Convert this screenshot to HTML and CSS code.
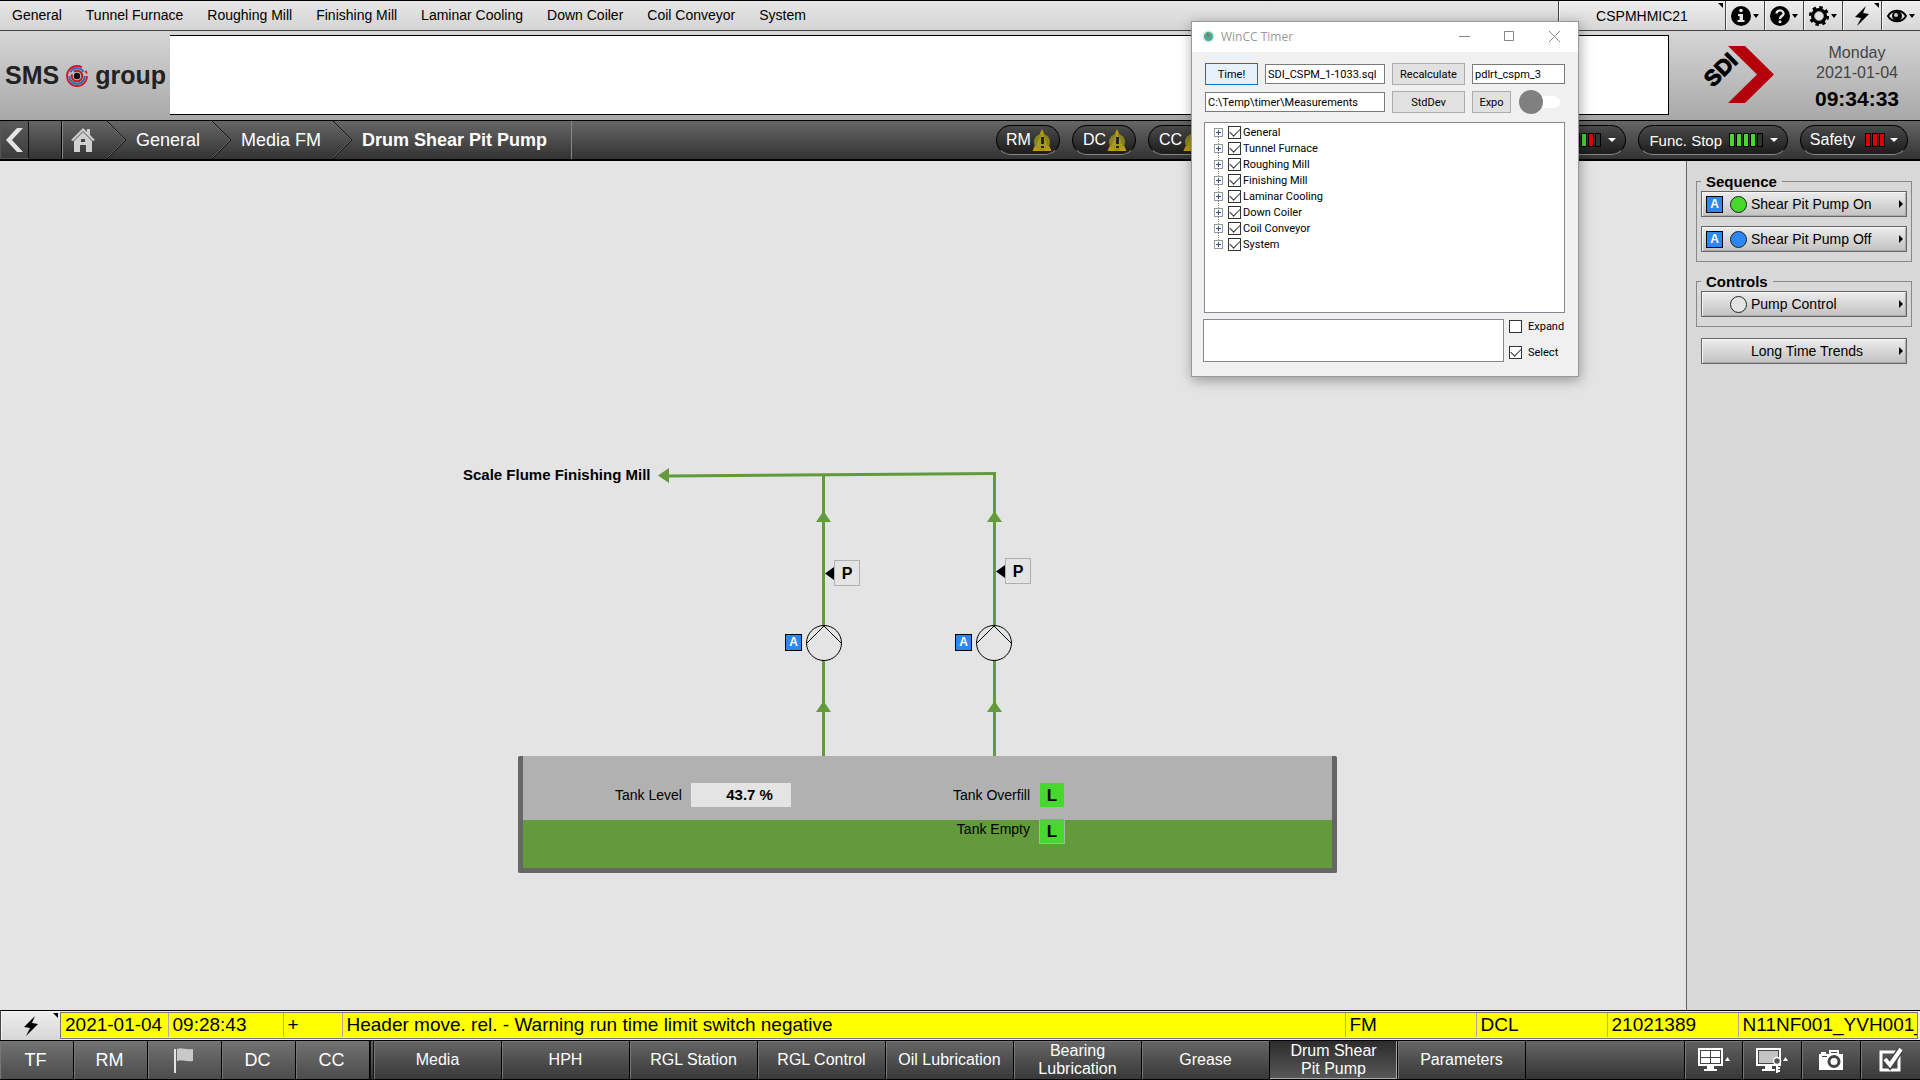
FILE: index.html
```html
<!DOCTYPE html>
<html lang="en">
<head>
<meta charset="utf-8">
<title>Drum Shear Pit Pump</title>
<link rel="stylesheet" href="styles.css">
</head>
<body>
<header>
  <div class="menubar">
    <nav class="menu">
      <a href="#">General</a><a href="#">Tunnel Furnace</a><a href="#">Roughing Mill</a><a href="#">Finishing Mill</a><a href="#">Laminar Cooling</a><a href="#">Down Coiler</a><a href="#">Coil Conveyor</a><a href="#">System</a>
    </nav>
    <div class="tools">
      <button class="tool station corner">CSPMHMIC21</button>
      <button class="tool" aria-label="Information">
        <svg width="28" height="22" viewBox="0 0 28 22"><circle cx="10" cy="11" r="10"/><circle cx="10" cy="5.500" r="1.800" fill="#e4e4e4"/><path d="M7 9h5v6h1.500v2h-7v-2H8.500v-4H7z" fill="#e4e4e4"/><path d="M22 9h6l-3 4z"/></svg>
      </button>
      <button class="tool" aria-label="Help">
        <svg width="28" height="22" viewBox="0 0 28 22"><circle cx="10" cy="11" r="10"/><path d="M6.500 8.500a3.500 3 0 1 1 5.500 2.400c-1.400 1-2 1.300-2 3" fill="none" stroke="#e4e4e4" stroke-width="2.400"/><circle cx="10" cy="16.800" r="1.500" fill="#e4e4e4"/><path d="M22 9h6l-3 4z"/></svg>
      </button>
      <button class="tool" aria-label="Settings">
        <svg width="28" height="22" viewBox="0 0 28 22"><circle cx="10" cy="11" r="8.600" fill="none" stroke="#000" stroke-width="3" stroke-dasharray="3.400 3.355"/><circle cx="10" cy="11" r="6" fill="none" stroke="#000" stroke-width="4"/><circle cx="10" cy="11" r="4.500" fill="#e4e4e4" stroke="#999"/><path d="M22 9h6l-3 4z"/></svg>
      </button>
      <button class="tool corner" aria-label="Alarms">
        <svg width="14" height="20" viewBox="0 0 14 20"><path d="M11 0 0 11l6 1-4 8L14 8 8 7z"/></svg>
      </button>
      <button class="tool" aria-label="View">
        <svg width="28" height="22" viewBox="0 0 28 22"><path d="M1 11c4-7 14-7 18 0-4 7-14 7-18 0z" fill="none" stroke="#000" stroke-width="2"/><circle cx="10" cy="11" r="5"/><circle cx="9" cy="10" r="2" fill="#ccc"/><path d="M22 9h6l-3 4z"/></svg>
      </button>
    </div>
  </div>

  <div class="banner">
    <div class="sms"><span>SMS</span>
      <svg width="22" height="22" viewBox="0 0 22 22" fill="none"><circle cx="11" cy="11" r="10" stroke="#cf1526" stroke-width="1.800" stroke-dasharray="52 5 3 3"/><circle cx="11" cy="11" r="7.700" stroke="#1d74bd" stroke-width="2" stroke-dasharray="24 4 16 4.400"/><circle cx="11" cy="11" r="5.300" stroke="#cf1526" stroke-width="2" stroke-dasharray="18 3"/><circle cx="11" cy="11" r="3.200" fill="#111"/></svg>
      <span>group</span></div>
    <div class="message"></div>
    <div class="sdi">
      <svg width="72" height="58" viewBox="0 0 72 58"><path d="M25 0h17l29 28.500L42 57H25l29-28.500z" fill="#b3000b"/><text class="sdi-text" transform="translate(10 42) rotate(-45)">SDI</text></svg>
    </div>
    <div class="clock"><span>Monday</span><span>2021-01-04</span><strong>09:34:33</strong></div>
  </div>

  <div class="navbar">
    <button class="back" aria-label="Back"><svg width="20" height="26" viewBox="0 0 20 26"><path d="M18 1 7 13l11 12h-6L1 13 12 1z" fill="#e4e4e4"/></svg></button>
    <div class="blank"></div>
    <nav class="crumbs">
      <a href="#" aria-label="Home" class="home"><svg width="24" height="24" viewBox="0 0 24 24" fill="#d0d0d0"><path d="m0 12 12-12 4 4V1h3v6l5 5-2 1L12 3 2 13z"/><path d="m3 13 9-9 9 9v11h-6v-7H9v7H3z"/><path d="M10 11h4v3h-4z" fill="#444"/></svg></a>
      <svg class="chev" width="20" height="38" viewBox="0 0 20 38" fill="none"><path d="M0 0 19 19 0 38" stroke="#111"/><path d="M-1 0 18 19-1 38" stroke="#777" stroke-width=".6"/></svg>
      <a href="#">General</a>
      <svg class="chev" width="20" height="38" viewBox="0 0 20 38" fill="none"><path d="M0 0 19 19 0 38" stroke="#111"/><path d="M-1 0 18 19-1 38" stroke="#777" stroke-width=".6"/></svg>
      <a href="#">Media FM</a>
      <svg class="chev" width="20" height="38" viewBox="0 0 20 38" fill="none"><path d="M0 0 19 19 0 38" stroke="#111"/><path d="M-1 0 18 19-1 38" stroke="#777" stroke-width=".6"/></svg>
      <a href="#" class="current">Drum Shear Pit Pump</a>
    </nav>
    <div class="areas">
      <button class="pill area">RM<svg width="20" height="22" viewBox="0 0 20 22"><path d="M10 0l9.500 22H.5z" fill="#c89a0c"/><circle cx="10" cy="13" r="8" fill="#8a8420"/><path d="M10 3l7 17H3z" fill="#a89a1c"/><path d="M9 8h3v7H9zM9 17h3v2H9z" fill="#222"/></svg></button>
      <button class="pill area">DC<svg width="20" height="22" viewBox="0 0 20 22"><path d="M10 0l9.500 22H.5z" fill="#c89a0c"/><circle cx="10" cy="13" r="8" fill="#8a8420"/><path d="M10 3l7 17H3z" fill="#a89a1c"/><path d="M9 8h3v7H9zM9 17h3v2H9z" fill="#222"/></svg></button>
      <button class="pill area">CC<svg width="20" height="22" viewBox="0 0 20 22"><path d="M10 0l9.500 22H.5z" fill="#c89a0c"/><circle cx="10" cy="13" r="8" fill="#8a8420"/><path d="M10 3l7 17H3z" fill="#a89a1c"/><path d="M9 8h3v7H9zM9 17h3v2H9z" fill="#222"/></svg></button>
    </div>
    <div class="stops">
      <button class="pill stop" aria-label="Stop status"><span class="bars"><i class="r"></i><i class="g"></i><i class="r"></i><i></i></span><b class="caret"></b></button>
      <button class="pill stop">Func. Stop<span class="bars"><i class="g"></i><i class="g"></i><i class="g"></i><i class="g"></i><i></i></span><b class="caret"></b></button>
      <button class="pill safety">Safety<span class="bars"><i class="r"></i><i class="r"></i><i class="r"></i></span><b class="caret"></b></button>
    </div>
  </div>
</header>

<main>
  <section class="canvas">
    <svg class="pipes" width="1686" height="760" viewBox="0 161 1686 760" fill="#639a3b">
      <g stroke="#639a3b" stroke-width="3" fill="none"><path d="M667 476 996 473.500"/><path d="M823.500 475V756"/><path d="M994.500 473V758"/></g>
      <path d="M658 475.500 669 468v15z"/>
      <path d="m823.500 511 7.500 11h-15zM994.500 511l7.500 11h-15zM823.500 701l7.500 11h-15zM994.500 701l7.500 11h-15z"/>
      <path d="m825 573.500 9-6.500v13zM996 571.500l9-6.500v13z" fill="#000"/>
      <g fill="#e4e4e4" stroke="#000"><circle cx="824" cy="643" r="17.500"/><path d="m807 643 17-17 17 17" fill="none"/><circle cx="994" cy="643" r="17.500"/><path d="m977 643 17-17 17 17" fill="none"/></g>
    </svg>
    <span class="dest">Scale Flume Finishing Mill</span>
    <span class="sensor s1">P</span><span class="sensor s2">P</span>
    <span class="mode m1">A</span><span class="mode m2">A</span>
    <div class="tank"><div class="liquid"></div></div>
    <div class="reading level"><label for="lvl">Tank Level</label><output id="lvl" class="value">43.7 %</output></div>
    <div class="reading over">Tank Overfill<span class="lamp">L</span></div>
    <div class="reading empty">Tank Empty<span class="lamp">L</span></div>
  </section>
  <aside>
    <fieldset><legend>Sequence</legend>
      <button class="cmd"><span class="mode">A</span><span class="dot on"></span><span class="name">Shear Pit Pump On</span></button>
      <button class="cmd"><span class="mode">A</span><span class="dot off"></span><span class="name">Shear Pit Pump Off</span></button>
    </fieldset>
    <fieldset><legend>Controls</legend>
      <button class="cmd"><span></span><span class="dot"></span><span class="name">Pump Control</span></button>
    </fieldset>
    <button class="cmd trends"><span></span><span></span><span class="name">Long Time Trends</span></button>
  </aside>
</main>

<footer>
  <div class="alarmbar">
    <button class="tool alarm corner" aria-label="Alarm list"><svg width="16" height="20" viewBox="0 0 14 20"><path d="M11 0 0 11l6 1-4 8L14 8 8 7z"/></svg></button>
    <div class="alarms">
      <table>
        <colgroup><col class="c-date"><col class="c-time"><col class="c-sign"><col><col class="c-id"><col class="c-id"><col class="c-id"><col class="c-tag"></colgroup>
        <tbody><tr><td>2021-01-04</td><td>09:28:43</td><td>+</td><td>Header move. rel. - Warning run time limit switch negative</td><td>FM</td><td>DCL</td><td>21021389</td><td>N11NF001_YVH001_</td></tr></tbody>
      </table>
    </div>
  </div>
  <div class="tabs">
    <div class="mills">
      <button class="key">TF</button><button class="key">RM</button>
      <button class="key" aria-label="Finishing mill flag"><svg width="20" height="25" viewBox="0 0 20 25"><path d="M0 1h2v24H0z" fill="#e4e4e4"/><path d="M3 1c5-2 7 1 16 0v12c-8 1-11-2-16 0z" fill="#c8c8c8"/></svg></button>
      <button class="key">DC</button><button class="key">CC</button>
    </div>
    <div class="pages">
      <button class="tab">Media</button><button class="tab">HPH</button><button class="tab">RGL Station</button><button class="tab">RGL Control</button><button class="tab">Oil Lubrication</button><button class="tab">Bearing<br>Lubrication</button><button class="tab">Grease</button><button class="tab active">Drum Shear<br>Pit Pump</button><button class="tab">Parameters</button>
    </div>
    <div class="actions">
      <button class="act" aria-label="Screens"><svg width="34" height="26" viewBox="0 0 34 26"><path d="M1 1h25v18H1z" fill="#fff"/><path d="M3 3h21v14H3z" fill="#444"/><path d="M4 4h9v6H4zM14 4h9v6h-9zM4 11h9v5H4zM14 11h9v5h-9zM10 19h7v3h3v2H7v-2h3z" fill="#fff"/><path d="M28 14l2.500-4 2.500 4z" fill="#fff"/></svg></button>
      <button class="act" aria-label="Screen lock"><svg width="34" height="26" viewBox="0 0 34 26"><path d="M1 1h25v18H1z" fill="#fff"/><path d="M3 3h21v14H3z" fill="#444"/><path d="M4 4h19v12H4z" fill="#c4c4c4"/><path d="M10 19h7v3h3v2H7v-2h3z" fill="#fff"/><circle cx="22" cy="14" r="3.500" fill="#555" stroke="#fff" stroke-width="1.500"/><path d="M22 18v8M22 21h3M22 24h3" stroke="#fff" stroke-width="2"/><path d="M28 14l2.500-4 2.500 4z" fill="#fff"/></svg></button>
      <button class="act" aria-label="Screenshot"><svg width="24" height="22" viewBox="0 0 24 22"><path d="M0 5h2V3h5v2h3V1h10v4h4v16H0z" fill="#fff"/><circle cx="15" cy="12.500" r="5" fill="#fff" stroke="#444" stroke-width="3"/><path d="M3 7h5v1H3zM12 3h6v1h-6z" fill="#444"/></svg></button>
      <button class="act" aria-label="Acknowledge"><svg width="24" height="26" viewBox="0 0 24 26"><path d="M2 5h18v18H2z" fill="none" stroke="#fff" stroke-width="3"/><path d="m6 12 5 6L22 2" fill="none" stroke="#444" stroke-width="7"/><path d="m6 12 5 6L22 2" fill="none" stroke="#fff" stroke-width="4"/></svg></button>
    </div>
  </div>
</footer>

<section class="window">
  <div class="titlebar">
    <svg width="13" height="13" viewBox="0 0 13 13"><circle cx="6.500" cy="6.500" r="6" fill="#c9ece3"/><circle cx="6.500" cy="6.500" r="4.500" fill="#4fa79d"/><path d="M5 2l3 4-3 1z" fill="#d0533c"/></svg>
    <span class="title">WinCC Timer</span>
    <button class="wbtn" aria-label="Minimize"><svg width="11" height="11"><path d="M0 5.500h11" stroke="#888"/></svg></button>
    <button class="wbtn" aria-label="Maximize"><svg width="11" height="11"><path d="M.5.5h9v9h-9z" fill="none" stroke="#888"/></svg></button>
    <button class="wbtn" aria-label="Close"><svg width="11" height="11"><path d="m0 0 11 11M11 0 0 11" stroke="#888"/></svg></button>
  </div>
  <div class="form">
    <div class="controls">
      <button class="btn primary">Time!</button>
      <input class="field" aria-label="SQL file" value="SDI_CSPM_1-1033.sql">
      <button class="btn">Recalculate</button>
      <input class="field" aria-label="Screen" value="pdlrt_cspm_3">
      <input class="field path" aria-label="Output folder" value="C:\Temp\timer\Measurements">
      <button class="btn">StdDev</button>
      <div class="switchrow"><button class="btn expo">Expo</button><input type="checkbox" class="toggle" aria-label="Run"></div>
    </div>
    <ul class="tree">
      <li><b class="plus"></b><label><input type="checkbox" checked>General</label></li>
      <li><b class="plus"></b><label><input type="checkbox" checked>Tunnel Furnace</label></li>
      <li><b class="plus"></b><label><input type="checkbox" checked>Roughing Mill</label></li>
      <li><b class="plus"></b><label><input type="checkbox" checked>Finishing Mill</label></li>
      <li><b class="plus"></b><label><input type="checkbox" checked>Laminar Cooling</label></li>
      <li><b class="plus"></b><label><input type="checkbox" checked>Down Coiler</label></li>
      <li><b class="plus"></b><label><input type="checkbox" checked>Coil Conveyor</label></li>
      <li><b class="plus"></b><label><input type="checkbox" checked>System</label></li>
    </ul>
    <div class="bottom">
      <textarea class="log" aria-label="Log"></textarea>
      <div class="checks"><label><input type="checkbox">Expand</label><label><input type="checkbox" checked>Select</label></div>
    </div>
  </div>
</section>
</body>
</html>
```

FILE: styles.css
```css
* { box-sizing: border-box; }
body {
  margin: 0;
  min-height: 100vh;
  display: flex;
  flex-direction: column;
  background: #e4e4e4;
  color: #000;
  font-family: "Liberation Sans", Arial, sans-serif;
  font-size: 14px;
  position: relative;
}
button, input, textarea { font: inherit; color: inherit; margin: 0; padding: 0; border: 0; background: none; border-radius: 0; }
a { color: inherit; text-decoration: none; }
svg { display: block; flex: none; }

/* menu bar */
.menubar {
  display: flex;
  height: 31px;
  border-top: 1px solid #000;
  border-bottom: 1px solid #444;
  background: linear-gradient(#e6e6e6, #d4d4d4);
}
.menu { display: flex; align-items: center; gap: 24px; padding: 0 0 1px 12px; flex: 1; white-space: nowrap; }
.tools { display: flex; }
.tool {
  position: relative;
  width: 39px;
  display: flex;
  align-items: center;
  justify-content: center;
  border-left: 1px solid #444;
  background: linear-gradient(#eee, #d6d6d6);
  box-shadow: inset 1px 1px #f6f6f6;
}
.station { width: 167px; }
.corner::after {
  content: "";
  position: absolute;
  top: 2px;
  right: 2px;
  border-top: 5px solid #000;
  border-left: 5px solid transparent;
}

/* banner */
.banner { display: flex; height: 89px; background: linear-gradient(#d6d6d6, #a8a8a8); }
.sms { width: 170px; padding-left: 5px; display: flex; align-items: center; gap: 7px; font-size: 25px; font-weight: bold; color: #222; }
.message { flex: 1; margin: 4px 0 5px; background: #fff; border: 1px solid #000; border-left: 0; }
.sdi { width: 124px; padding: 15px 0 0 34px; }
.sdi svg { overflow: visible; }
.sdi-text { font-size: 22px; font-weight: bold; stroke: #000; stroke-width: 1px; }
.clock { width: 127px; padding: 12px 0 0 1px; text-align: center; font-size: 16px; line-height: 20px; color: #444; }
.clock span { display: block; }
.clock strong { display: block; color: #000; font-size: 21px; line-height: 32px; }

/* navigation bar */
.navbar {
  display: flex;
  height: 41px;
  border-top: 1px solid #000;
  border-bottom: 2px solid #000;
  background: linear-gradient(#666, #333);
  color: #fff;
}
.back { width: 29px; display: flex; align-items: center; justify-content: center; border: 1px solid #555; border-right: 1px solid #111; background: linear-gradient(#5a5a5a, #3c3c3c); }
.blank { width: 33px; border-right: 1px solid #000; }
.crumbs { display: flex; align-items: center; gap: 9px; padding: 0 24px 0 8px; border-left: 1px solid #888; border-right: 1px solid #888; font-size: 18px; white-space: nowrap; }
.crumbs .current { font-weight: bold; }
.crumbs a + .chev { margin-left: 3px; }
.areas { display: flex; gap: 12px; margin: 0 264px 0 auto; padding-top: 4px; }
.stops { display: flex; gap: 12px; padding: 4px 12px 0 0; }
.pill {
  height: 30px;
  display: flex;
  align-items: center;
  justify-content: center;
  border: 1px solid #000;
  border-bottom-color: #888;
  border-radius: 15px;
  background: linear-gradient(#4a4a4a, #1c1c1c);
  font-size: 16px;
  white-space: nowrap;
  gap: 7px;
}
.area { width: 64px; gap: 1px; padding-left: 2px; }
.stop { width: 150px; justify-content: flex-end; padding-right: 9px; font-size: 15px; }
.safety { width: 108px; gap: 10px; }
.bars { display: flex; gap: 1px; }
.bars i { width: 6px; height: 14px; border: 1px solid #000; background: #333; }
.bars .g { background: #46d82c; }
.bars .r { background: #e00000; }
.caret { border: 4px solid transparent; border-top-color: #fff; border-bottom: 0; }
.safety .caret { margin-left: -5px; }

/* process picture */
main { flex: 1; display: flex; }
.canvas { flex: 1; position: relative; min-width: 0; min-height: 760px; overflow: hidden; }
.pipes { position: absolute; left: 0; top: 0; }
.dest, .sensor, .canvas > .mode, .tank, .reading { position: absolute; }
.dest { left: 463px; top: 306px; font-size: 15px; line-height: 16px; font-weight: bold; white-space: nowrap; }
.sensor { width: 26px; height: 26px; border: 1px solid #b0b0b0; font-size: 16px; font-weight: bold; line-height: 25px; text-align: center; }
.s1 { left: 834px; top: 399px; }
.s2 { left: 1005px; top: 397px; }
.mode { width: 17px; height: 17px; border: 1px solid #000; background: #2d87f0; color: #fff; font-size: 12px; font-weight: bold; line-height: 15px; text-align: center; }
.m1 { left: 785px; top: 473px; }
.m2 { left: 955px; top: 473px; }
.tank { left: 518px; top: 595px; width: 819px; height: 117px; border: 5px solid #666; border-top: 0; border-radius: 2px; background: #b1b1b1; }
.liquid { margin-top: 64px; height: 48px; background: #639a3b; }
.reading { display: flex; align-items: center; gap: 9px; height: 26px; line-height: 22px; white-space: nowrap; }
.level { left: 615px; top: 621px; }
.over { right: 621px; top: 621px; }
.empty { right: 621px; top: 657px; align-items: flex-start; }
.value { width: 100px; height: 24px; padding-right: 18px; background: #e4e4e4; font-size: 15px; font-weight: bold; line-height: 24px; text-align: right; }
.lamp { width: 26px; height: 26px; border: 1px solid #b1b1b1; background: #46d82c; font-size: 17px; line-height: 26px; text-align: center; font-weight: bold; }

/* side panel */
aside { width: 234px; padding: 12px 8px 0 9px; border-left: 1px solid #666; background: #d8d8d8; }
fieldset { margin: 0 0 11px; padding: 1px 4px 9px; border: 1px solid #888; min-width: 0; }
legend { padding: 0 5px; font-size: 15px; font-weight: bold; line-height: 17px; }
.cmd {
  position: relative;
  width: 100%;
  height: 26px;
  display: grid;
  grid-template-columns: 17px 17px 1fr;
  column-gap: 7px;
  align-items: center;
  padding-left: 4px;
  text-align: left;
  border: 1px solid #666;
  background: linear-gradient(#ececec, #c2c2c2);
  box-shadow: inset 1px 1px #f6f6f6, inset -1px -1px #aaa;
}
.cmd + .cmd { margin-top: 9px; }
.cmd::after { content: ""; position: absolute; right: 3px; top: 8px; border: 4px solid transparent; border-left-color: #000; border-right: 0; }
.dot { width: 17px; height: 17px; border: 1px solid #222; border-radius: 50%; background: #e4e4e4; }
.on { background: #46d82c; }
.off { background: #2d87f0; }
.trends { width: 206px; margin-left: 5px; }
.name { margin-left: -3px; }

/* alarm line */
.alarmbar { display: flex; height: 31px; border-top: 1px solid #000; border-bottom: 1px solid #000; background: #eee; }
.alarm { width: 60px; }
.alarms { flex: 1; min-width: 0; margin: 1px 2px 1px 0; border: 1px solid #777; overflow: hidden; }
table { width: 100%; height: 24px; table-layout: fixed; border-collapse: collapse; }
.c-date { width: 107px; }
.c-time { width: 115px; }
.c-sign { width: 59px; }
.c-id { width: 131px; }
.c-tag { width: 179px; }
td { height: 24px; padding: 0 0 0 4px; border-right: 1px solid #aaa; background: #ff0; font-size: 19px; line-height: 22px; white-space: nowrap; overflow: hidden; }
td:last-child { border-right: 0; }

/* bottom tabs */
.tabs { display: flex; height: 39px; border-bottom: 1px solid #000; background: linear-gradient(#666, #333); color: #fff; }
.mills, .pages, .actions { display: flex; }
.mills { border-right: 4px double #111; }
.actions { margin-left: auto; }
.key, .tab, .act { display: flex; align-items: center; justify-content: center; border-right: 1px solid #000; box-shadow: inset 1px 1px #777; }
.key { width: 74px; padding-right: 2px; font-size: 18px; background: linear-gradient(#727272, #4c4c4c); }
.tab { width: 128px; font-size: 16px; line-height: 18px; text-align: center; white-space: nowrap; background: linear-gradient(#666, #383838); }
.active { background: linear-gradient(#2c2c2c, #585858); box-shadow: inset -1px -1px #aaa; }
.act { width: 59px; background: linear-gradient(#606060, #383838); }
.act:first-child { border-left: 1px solid #000; }
.act:last-child { border-right: 0; }

/* timer window */
.window {
  position: absolute;
  right: 341px;
  top: 21px;
  width: 388px;
  height: 356px;
  border: 1px solid #999;
  background: #f0f0f0;
  box-shadow: 1px 3px 12px rgba(0, 0, 0, .35);
  font-family: Roboto, "Liberation Sans", sans-serif;
  font-size: 11px;
}
.titlebar { display: flex; align-items: center; height: 30px; padding: 0 1px 1px 10px; background: #fff; color: #999; }
.title { flex: 1; padding-left: 6px; font-family: "Open Sans", "Noto Sans", sans-serif; font-size: 12px; }
.wbtn { width: 45px; height: 29px; display: flex; align-items: center; justify-content: center; }
.form { padding: 11px 13px 0 12px; }
.controls { display: grid; grid-template-columns: 53px 120px 73px 93px; gap: 6px 7px; align-items: center; padding-left: 1px; }
.btn { height: 22px; border: 1px solid #adadad; background: #e1e1e1; }
.primary { border-color: #0078d7; background: #e5f1fb; }
.field { min-width: 0; width: 100%; height: 20px; padding-left: 2px; border: 1px solid #7a7a7a; background: #fff; }
.path { grid-column: span 2; }
.switchrow { display: flex; align-items: center; gap: 8px; }
.expo { width: 39px; }
.toggle { appearance: none; position: relative; width: 41px; height: 12px; border-radius: 6px; background: #fff; }
.toggle::before { content: ""; position: absolute; left: 0; top: -6px; width: 24px; height: 24px; border-radius: 50%; background: #808080; }
.tree { margin: 9px 0 0; padding: 1px 0 0 9px; height: 191px; border: 1px solid #828790; background: #fff; list-style: none; }
.tree li { position: relative; display: flex; align-items: center; height: 16px; }
.tree li + li::before { content: ""; position: absolute; left: 4px; top: -4px; height: 8px; border-left: 1px dotted #888; }
.tree label { display: flex; align-items: center; gap: 2px; }
.plus { width: 9px; height: 9px; margin-right: 5px; border: 1px solid #999; background: linear-gradient(#35508f, #35508f) center / 5px 1px no-repeat, linear-gradient(#35508f, #35508f) center / 1px 5px no-repeat, #fff; }
.window label input {
  appearance: none;
  width: 13px;
  height: 13px;
  border: 1px solid #333;
  background: #fff;
  flex: none;
  display: flex;
  align-items: center;
  justify-content: center;
}
.window label input:checked::before { content: ""; width: 9px; height: 5px; margin-top: -3px; border: solid #333; border-width: 0 0 1px 1px; transform: rotate(-45deg); }
.bottom { display: flex; gap: 5px; margin: 6px -8px 0 -1px; }
.log { width: 301px; height: 43px; border: 1px solid #828790; background: #fff; resize: none; }
.checks { display: flex; flex-direction: column; gap: 13px; padding-top: 1px; }
.checks label { display: flex; align-items: center; gap: 6px; height: 13px; }
```
